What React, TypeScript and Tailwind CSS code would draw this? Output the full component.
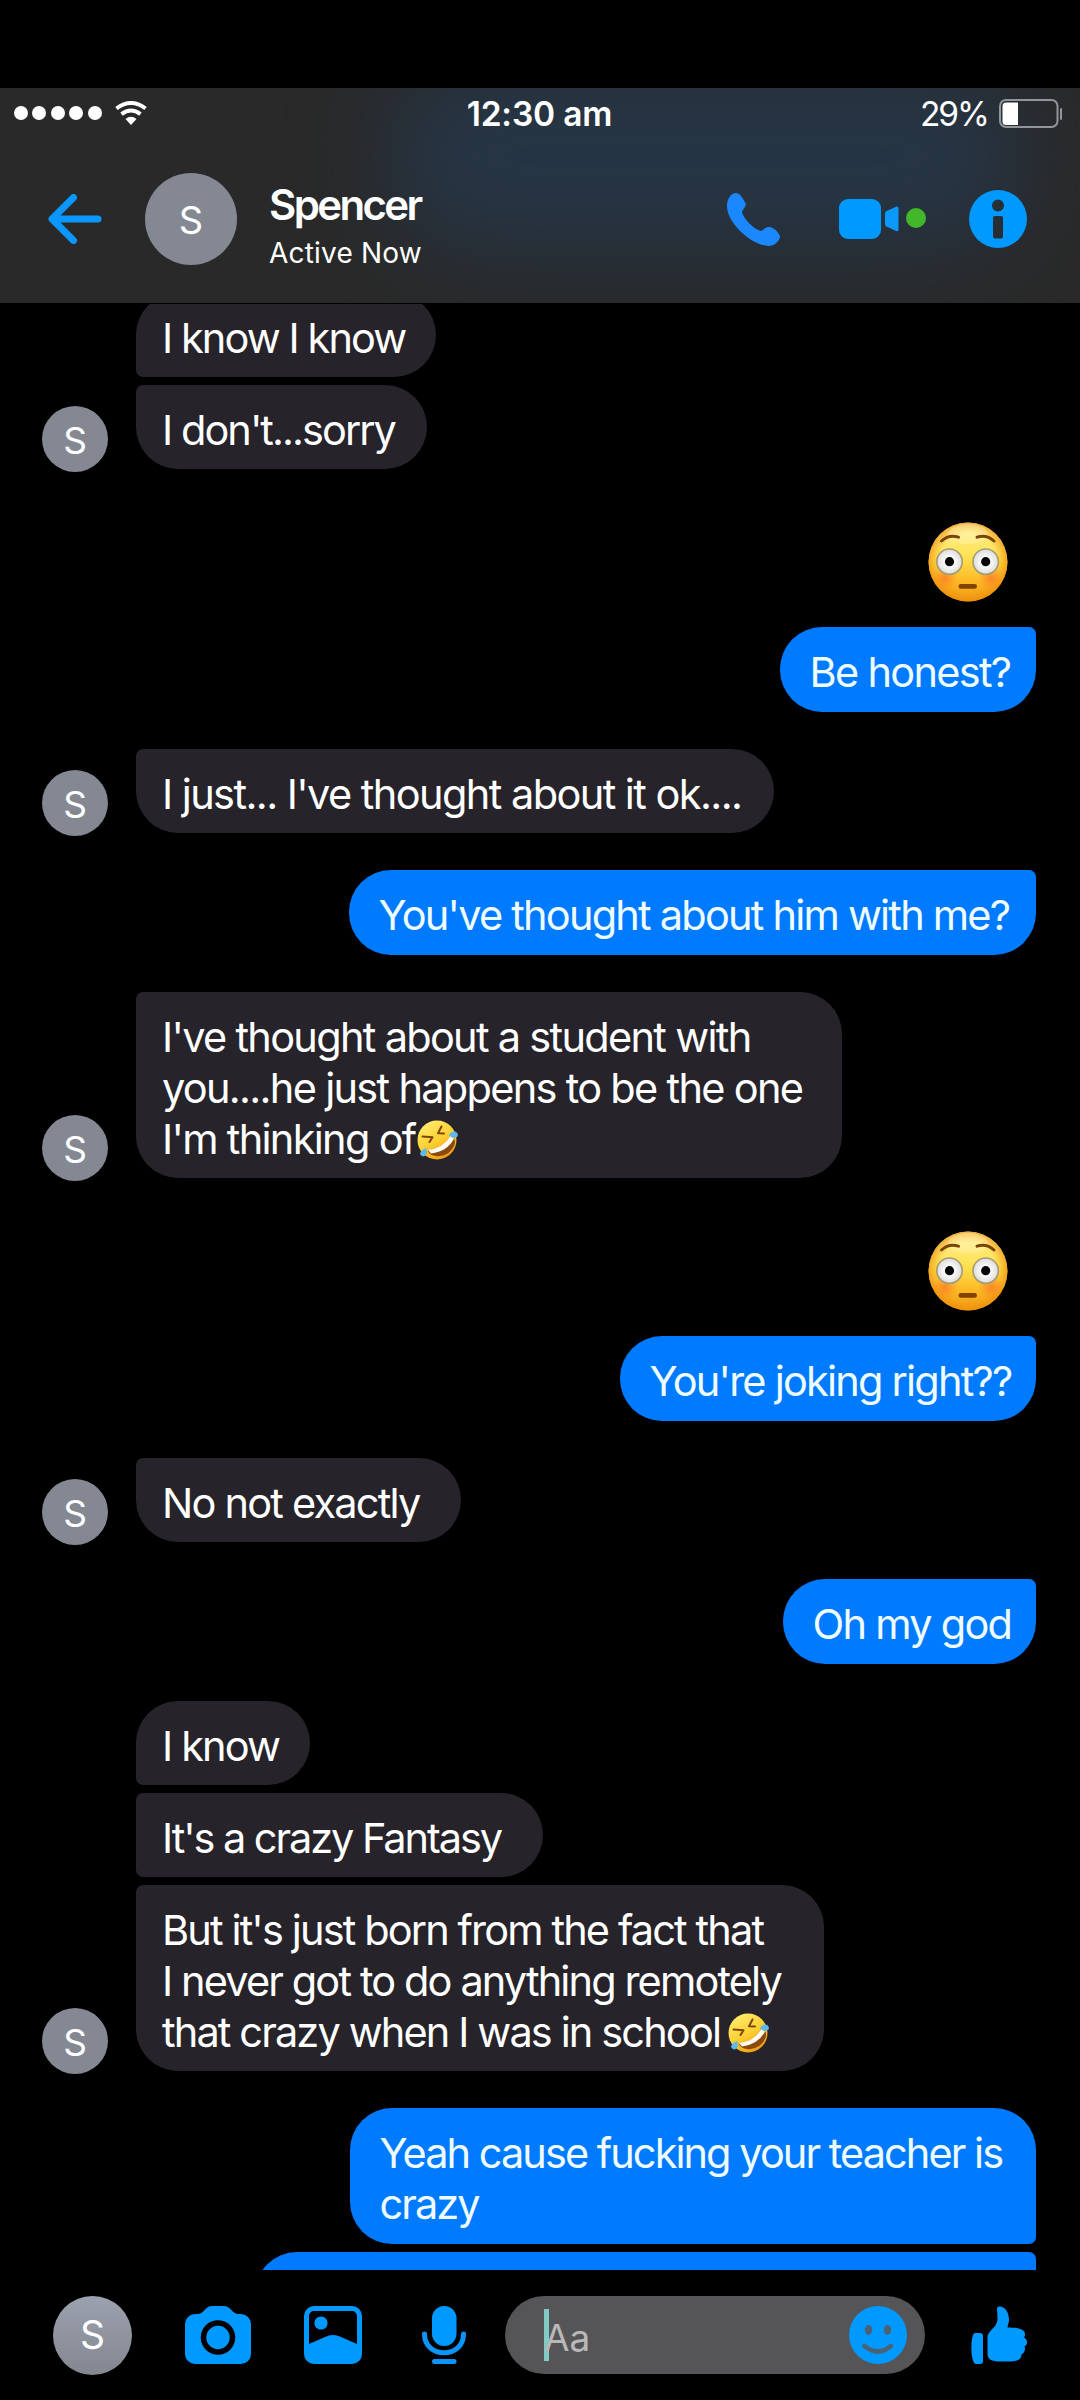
import clsx from "clsx";

type Message = {
  from: "them" | "me";
  lines?: string[];
  emoji?: boolean;
  laugh?: string;
  avatar?: boolean;
  className: string;
};

const messages: Message[] = [
  { from: "them", lines: ["I know I know"], className: "-mt-[11px] w-[300px] rounded-bl-[7px] tracking-[-0.046em]" },
  { from: "them", lines: ["I don't...sorry"], avatar: true, className: "mt-2 w-[291px] rounded-tl-[7px] tracking-[-0.047em]" },
  { from: "me", emoji: true, className: "mt-[53px]" },
  { from: "me", lines: ["Be honest?"], className: "mt-[25px] w-[256px] rounded-tr-[7px] tracking-[-0.041em]" },
  {
    from: "them",
    lines: ["I just... I've thought about it ok...."],
    avatar: true,
    className: "mt-[37px] w-[638px] rounded-tl-[7px] tracking-[-0.038em]",
  },
  { from: "me", lines: ["You've thought about him with me?"], className: "mt-[37px] w-[687px] rounded-tr-[7px] tracking-[-0.043em]" },
  {
    from: "them",
    lines: ["I've thought about a student with", "you....he just happens to be the one", "I'm thinking of"],
    laugh: "ml-px",
    avatar: true,
    className: "mt-[37px] w-[706px] rounded-tl-[7px] tracking-[-0.041em]",
  },
  { from: "me", emoji: true, className: "mt-[53px]" },
  { from: "me", lines: ["You're joking right??"], className: "mt-[25px] w-[416px] rounded-tr-[7px] tracking-[-0.043em]" },
  { from: "them", lines: ["No not exactly"], avatar: true, className: "mt-[37px] w-[325px] rounded-tl-[7px] tracking-[-0.043em]" },
  { from: "me", lines: ["Oh my god"], className: "mt-[37px] w-[253px] rounded-tr-[7px] tracking-[-0.042em]" },
  { from: "them", lines: ["I know"], className: "mt-[37px] w-[174px] rounded-bl-[7px] tracking-[-0.044em]" },
  { from: "them", lines: ["It's a crazy Fantasy"], className: "mt-2 w-[407px] rounded-l-[7px] tracking-[-0.05em]" },
  {
    from: "them",
    lines: ["But it's just born from the fact that", "I never got to do anything remotely", "that crazy when I was in school "],
    laugh: "-ml-0.5",
    avatar: true,
    className: "mt-2 w-[688px] rounded-tl-[7px] tracking-[-0.045em]",
  },
  {
    from: "me",
    lines: ["Yeah cause fucking your teacher is", "crazy"],
    className: "mt-[37px] w-[686px] rounded-br-[7px] tracking-[-0.047em]",
  },
  { from: "me", lines: [""], className: "mt-2 w-[781px] rounded-tr-[7px]" },
];

const FlushedFace = () => (
  <svg viewBox="0 0 80 80" className="size-20">
    <defs>
      <linearGradient id="flushedSkin" x1="0" y1="0" x2="0" y2="1">
        <stop offset="0" stopColor="#fff2a0" />
        <stop offset="0.45" stopColor="#ffe04c" />
        <stop offset="0.75" stopColor="#fcb825" />
        <stop offset="1" stopColor="#ee9a13" />
      </linearGradient>
      <radialGradient id="flushedEdge">
        <stop offset="0.72" stopColor="#f49a10" stopOpacity="0" />
        <stop offset="1" stopColor="#ee8a08" stopOpacity="0.65" />
      </radialGradient>
      <radialGradient id="flushedCheek">
        <stop offset="0" stopColor="#fb6a26" stopOpacity="0.65" />
        <stop offset="1" stopColor="#fb7a26" stopOpacity="0" />
      </radialGradient>
      <radialGradient id="flushedEye">
        <stop offset="0.3" stopColor="#ffffff" />
        <stop offset="1" stopColor="#dcdcdc" />
      </radialGradient>
    </defs>
    <circle cx="40" cy="40" r="39.5" fill="url(#flushedSkin)" />
    <circle cx="40" cy="40" r="39.5" fill="url(#flushedEdge)" />
    <ellipse cx="40" cy="12" rx="20" ry="10" fill="#fff7bd" opacity="0.35" />
    <circle cx="17" cy="56" r="13" fill="url(#flushedCheek)" />
    <circle cx="63" cy="56" r="13" fill="url(#flushedCheek)" />
    <path d="M13.5 19 Q21 12 30.5 15.2 M66 19 Q58.5 12 49 15.2" fill="none" stroke="#7a4504" strokeWidth="3" strokeLinecap="round" />
    <circle cx="21.5" cy="39.7" r="12.7" fill="url(#flushedEye)" stroke="#a39b72" strokeWidth="1.6" />
    <circle cx="57.7" cy="39.7" r="12.7" fill="url(#flushedEye)" stroke="#a39b72" strokeWidth="1.6" />
    <circle cx="21.5" cy="39.7" r="4.6" fill="#050505" />
    <circle cx="57.7" cy="39.7" r="4.6" fill="#050505" />
    <rect x="30.5" y="62" width="18.5" height="4.8" rx="2.4" fill="#804305" />
  </svg>
);

const LaughingFace = ({ className }: { className: string }) => (
  <svg viewBox="0 0 42 40" className={clsx("h-10 w-[42px]", className)}>
    <defs>
      <linearGradient id="laughSkin" x1="0.2" y1="0" x2="0.8" y2="1">
        <stop offset="0" stopColor="#ffee70" />
        <stop offset="0.5" stopColor="#fdcf32" />
        <stop offset="1" stopColor="#ee9412" />
      </linearGradient>
    </defs>
    <circle cx="20" cy="20" r="19.5" fill="url(#laughSkin)" />
    <path d="M10.5 30.5 Q27 29 33.5 15.5 Q39.5 18 37.5 25 Q33 35 23 36 Q13.5 37 10.5 30.5Z" fill="#8b4a0b" />
    <path d="M11 30 Q26.5 28.5 33.5 15.8 L37 18.5 Q30.5 31.5 14 33.5Z" fill="#fffdf5" />
    <path
      d="M5.5 16.5 L15.5 17.3 L12.5 22 M24.5 6.5 L21 13.2 L27 13.5"
      fill="none"
      stroke="#7d4506"
      strokeWidth="2"
      strokeLinecap="round"
      strokeLinejoin="round"
    />
    <path d="M32 15.5 Q33 11.5 38 11.5 Q42 13 40.5 16.5 Q37 19.5 32 15.5Z" fill="#5db9ee" />
    <path d="M9 28 Q3.5 30 3 34 Q5 38 8.5 35.5 Q11 32.5 9 28Z" fill="#5db9ee" />
  </svg>
);

const Bubble = ({ message }: { message: Message }) => {
  const mine = message.from === "me";
  const lines = message.lines ?? [];
  return (
    <div
      className={clsx(
        "shrink-0 rounded-[42px] pt-5 text-[41.5px] leading-[51px] whitespace-pre",
        mine ? "bg-[#007aff] pb-3.5 pl-[29.5px] text-[#effcff]" : "bg-[#26232a] pb-[13px] pl-[26px] text-white",
        message.className
      )}
    >
      {lines.map((line, i) => (
        <div key={i} className="flex h-[51px] items-center">
          <span>{line}</span>
          {message.laugh && i === lines.length - 1 && <LaughingFace className={message.laugh} />}
        </div>
      ))}
    </div>
  );
};

const MessageRow = ({ message }: { message: Message }) => {
  if (message.emoji) {
    return (
      <div className={clsx("flex justify-end pr-[72px]", message.className)}>
        <FlushedFace />
      </div>
    );
  }
  if (message.from === "me") {
    return (
      <div className="flex justify-end pr-11">
        <Bubble message={message} />
      </div>
    );
  }
  return (
    <div className="flex items-end gap-7 pl-[42px]">
      {message.avatar ? (
        <div className="-mb-[3px] flex size-[66px] items-center justify-center rounded-full bg-[#848893] pt-[3px] text-[37px] text-white">S</div>
      ) : (
        <div className="w-[66px]" />
      )}
      <Bubble message={message} />
    </div>
  );
};

const StatusBar = () => (
  <div className="flex h-[50px] items-center justify-between pr-[17px] pl-3.5 text-white">
    <div className="flex w-[400px] items-center">
      <div className="flex gap-[4.4px]">
        {[0, 1, 2, 3, 4].map((dot) => (
          <span key={dot} className="size-3.5 rounded-full bg-white" />
        ))}
      </div>
      <svg viewBox="0 0 32 24" className="ml-[13px] h-6 w-8" fill="none" stroke="white" strokeWidth="4">
        <path d="M1.5 7.5 Q16 -3.5 30.5 7.5" />
        <path d="M6.5 13.2 Q16 5.8 25.5 13.2" />
        <path d="M10.5 18 Q16 13.5 21.5 18 L16 24Z" fill="white" stroke="none" />
      </svg>
    </div>
    <span className="pt-0.5 pl-0.5 text-[33.5px] font-semibold tracking-[-0.005em]">12:30 am</span>
    <div className="flex w-[400px] items-center justify-end">
      <span className="pt-0.5 text-[33.5px] tracking-[-0.06em]">29%</span>
      <svg viewBox="0 0 64 29" className="ml-[11px] h-[29px] w-16">
        <rect x="1" y="1" width="57.5" height="27" rx="6" fill="none" stroke="#8f969c" strokeWidth="2" />
        <path d="M7 3.5 H19 V26 H7 Q3.5 26 3.5 22.5 V7 Q3.5 3.5 7 3.5Z" fill="white" />
        <rect x="61" y="9" width="2" height="12" rx="1" fill="#8f969c" />
      </svg>
    </div>
  </div>
);

const Header = () => (
  <header className="relative h-[215px] overflow-hidden bg-[#292929]">
    <div className="absolute top-[-30px] left-[385px] h-[195px] w-[640px] rounded-[95px] bg-[#263545] blur-[46px]" />
    <div className="relative">
      <StatusBar />
      <div className="flex h-[162px] items-center pr-[53px] pl-12">
        <svg viewBox="0 0 54 50" className="h-[50px] w-[54px]" fill="none" stroke="#0a97ff" strokeWidth="7" strokeLinecap="round" strokeLinejoin="round">
          <path d="M25.5 3.5 L4 25 L25.5 46.5 M5 25 H50" />
        </svg>
        <div className="ml-[43px] flex size-[92px] items-center justify-center rounded-full bg-[#848893] pt-0.5 text-[38px] text-white">S</div>
        <div className="ml-8 flex w-[280px] flex-col pt-3.5 text-white">
          <span className="text-[42px] leading-[46px] font-semibold tracking-[-0.063em]">Spencer</span>
          <span className="mt-[7px] text-[28px] leading-9 tracking-[0.007em]">Active Now</span>
        </div>
        <div className="ml-auto flex items-center">
          <svg viewBox="0 0 53 53" className="size-[53px]">
            <path
              d="M0 13 C0 6 4 0 9 0 C13 0 16 6 18.5 10 C20 13 15.5 16 15 19.5 C17 26 27 36.5 34 38 C37 37 38 34 42 34 C47 34 53 41 53 43.5 C53 47 48 53 42 53 C26 53 0 31 0 13Z"
              fill="#1c88ff"
            />
          </svg>
          <svg viewBox="0 0 88 42" className="ml-[59px] h-[42px] w-[88px]">
            <rect x="0" y="1" width="42" height="40" rx="9" fill="#0099ff" />
            <path d="M46 15.5 Q46 14 47.5 13 L57 8.8 Q59.5 8 59.5 10.5 V31.5 Q59.5 34 57 33 L47.5 28.5 Q46 27.5 46 26Z" fill="#0b99fb" />
            <circle cx="77" cy="20" r="10" fill="#43b72a" />
          </svg>
          <svg viewBox="0 0 58 58" className="ml-[42px] size-[58px]">
            <path
              fillRule="evenodd"
              fill="#0099ff"
              d="M29 0 A29 29 0 1 1 29 58 A29 29 0 1 1 29 0Z M29 9.5 A6 6 0 1 0 29 21.5 A6 6 0 1 0 29 9.5Z M26 26 Q24 26 24 28 V46 Q24 48.5 26 48.5 H32 Q34 48.5 34 46 V28 Q34 26 32 26Z"
            />
          </svg>
        </div>
      </div>
    </div>
  </header>
);

const Composer = () => (
  <footer className="flex h-[130px] items-center bg-black px-[53px]">
    <div className="flex size-[79px] items-center justify-center rounded-full bg-linear-to-b from-[#9ca1af] to-[#838790] text-[39px] text-white">S</div>
    <svg viewBox="0 0 66 58" className="ml-[53px] h-[58px] w-[66px]" fill="#0099ff">
      <path
        fillRule="evenodd"
        d="M10 8 H12 C20 8 19 0 28 0 H38 C47 0 46 8 54 8 H56 A10 10 0 0 1 66 18 V48 A10 10 0 0 1 56 58 H10 A10 10 0 0 1 0 48 V18 A10 10 0 0 1 10 8Z M33 14.2 A17.3 17.3 0 1 0 33 48.8 A17.3 17.3 0 1 0 33 14.2Z"
      />
      <circle cx="33" cy="31.5" r="11.7" />
    </svg>
    <svg viewBox="0 0 58 58" className="ml-[53px] size-[58px]" fill="#0099ff">
      <path
        fillRule="evenodd"
        d="M10 0 H48 A10 10 0 0 1 58 10 V48 A10 10 0 0 1 48 58 H10 A10 10 0 0 1 0 48 V10 A10 10 0 0 1 10 0Z M10 5 A5 5 0 0 0 5 10 V38 L21 31 Q29 27 37 31 L53 38 V10 A5 5 0 0 0 48 5Z"
      />
      <circle cx="17" cy="17" r="6.6" />
    </svg>
    <svg viewBox="0 0 44 58" className="ml-[60px] h-[58px] w-11" fill="#0099ff">
      <rect x="10" y="0" width="24.5" height="40" rx="12.2" />
      <path d="M2.5 28 C2.5 53 41.5 53 41.5 28" fill="none" stroke="#0b96f7" strokeWidth="5" strokeLinecap="round" />
      <rect x="10" y="53" width="24.5" height="5" rx="2.5" fill="#0b96f7" />
    </svg>
    <div className="ml-[39px] flex h-[78px] w-[420px] items-center rounded-full bg-[#555557] pr-[18px] pl-[39px]">
      <div className="h-[52px] w-[5px] bg-[#82cbc4]" />
      <span className="-ml-[5px] pt-[5px] text-[37px] leading-[46px] text-[#b9b9b9]">Aa</span>
      <svg viewBox="0 0 58 58" className="ml-auto size-[58px]">
        <circle cx="29" cy="29" r="29" fill="#0099ff" />
        <ellipse cx="19.5" cy="24" rx="3.7" ry="5" fill="#4a6273" />
        <ellipse cx="38.5" cy="24" rx="3.7" ry="5" fill="#4a6273" />
        <path d="M15.5 40 Q29 51 42 40" fill="none" stroke="#4a6273" strokeWidth="4.6" strokeLinecap="round" />
      </svg>
    </div>
    <svg viewBox="0 0 56 58" className="ml-[46px] h-[58px] w-14" fill="#0099ff">
      <path d="M4 27 H9 Q12 27 12 30 V55 Q12 58 9 58 H5 C-1 58 -1 27 4 27Z" />
      <path d="M26 2 C27 -1.5 38 0 38 14 C38 17 36.5 19 36.5 21.5 C44 21.5 54 22 54 28 C54 30 53.5 31 53 31.5 C57 34 57 38 53.5 40.5 C54.5 43.5 54 46.5 50.5 48.5 C50.5 53 47 55.5 38 55.5 H30 C20 55.5 16.5 53 16.5 48 V31 C16.5 24 27 22 26.5 12Z" />
    </svg>
  </footer>
);

const App = () => {
  return (
    <div className="flex h-[2400px] w-[1080px] flex-col overflow-hidden bg-black pt-[88px] font-['Inter','Noto_Sans',sans-serif]">
      <Header />
      <main className="mt-px flex h-[1966px] flex-col overflow-hidden">
        {messages.map((message, i) => (
          <MessageRow key={i} message={message} />
        ))}
      </main>
      <Composer />
    </div>
  );
};

export default App;
